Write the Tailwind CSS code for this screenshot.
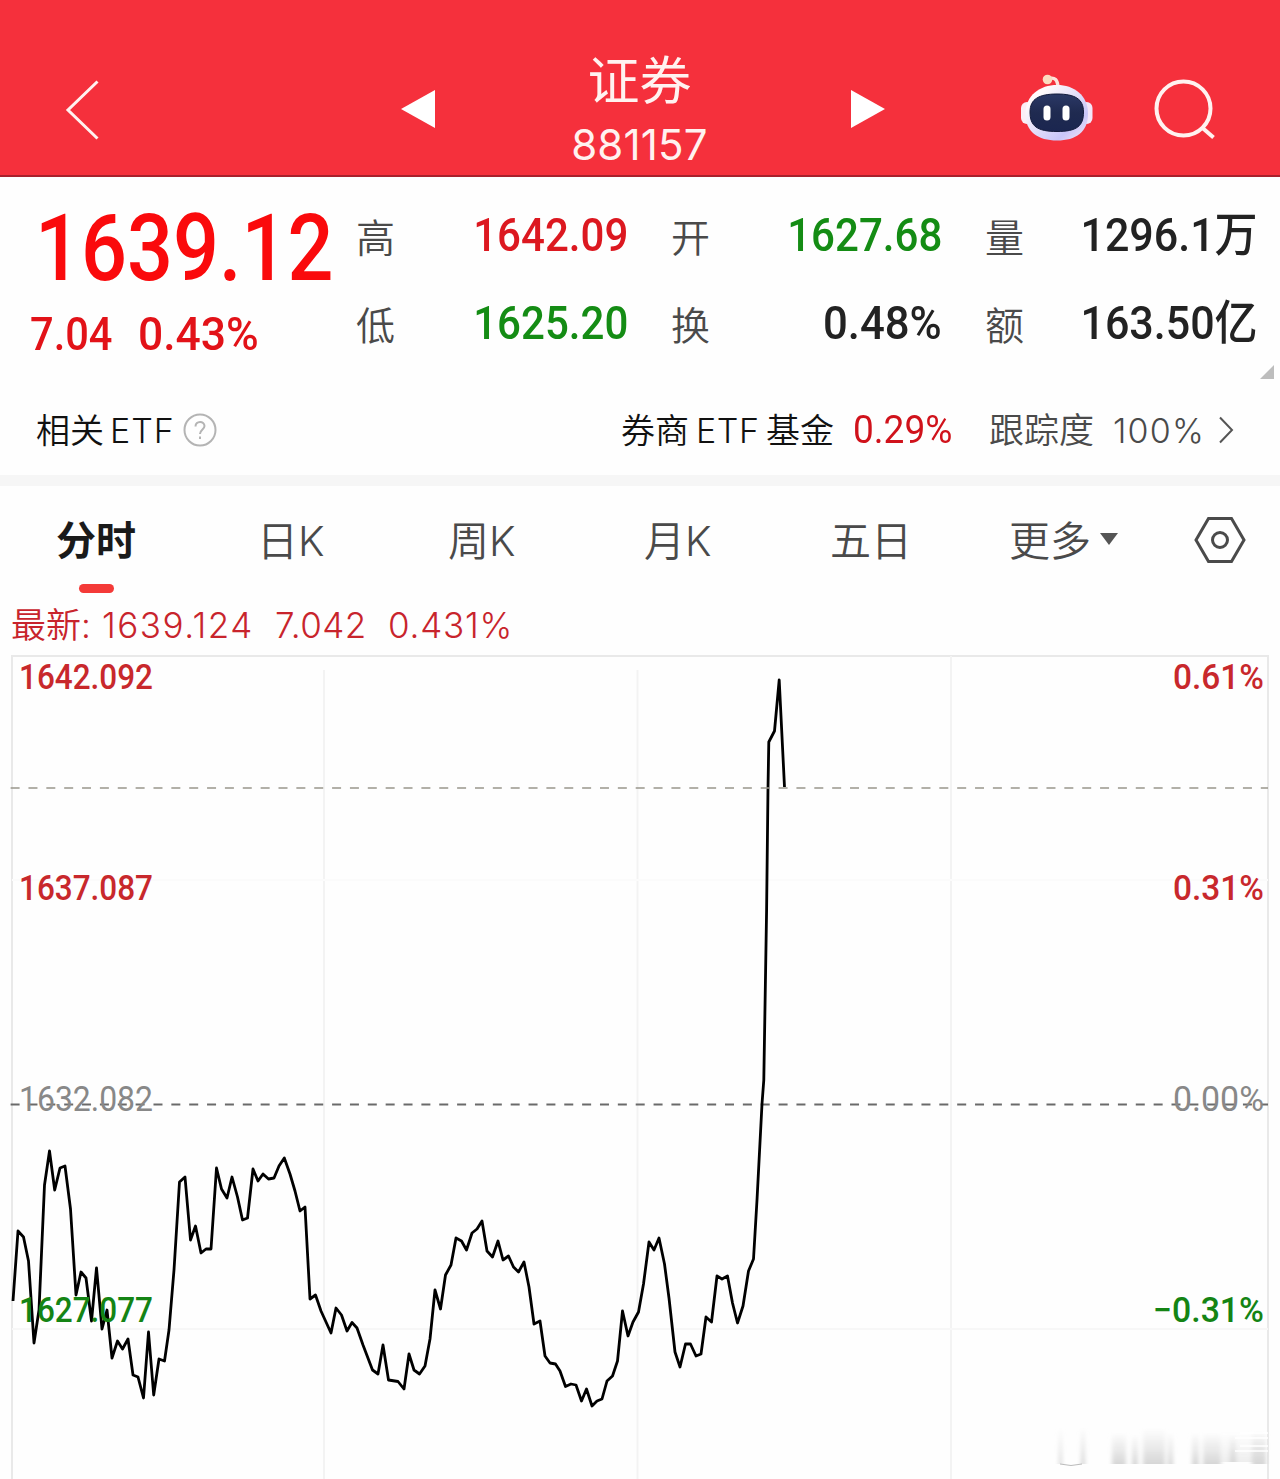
<!DOCTYPE html>
<html lang="zh-CN">
<head>
  <meta charset="UTF-8">
  <title>证券 881157</title>
  <script src="https://cdn.jsdelivr.net/npm/@tailwindcss/browser@4"></script>
</head>
<body class="w-[1280px] h-[1479px] overflow-hidden bg-[#fefefe] font-['Inter','Noto_Sans_CJK_SC',sans-serif] text-[#222] whitespace-nowrap">

  <!-- Header -->
  <header class="h-[177px] bg-[#f5303c] border-b-2 border-[#a8202c] flex items-start">
    <svg class="w-[40px] h-[64px] ml-[62px] mt-[78px]" viewBox="0 0 40 64" fill="none" stroke="#fff2f0" stroke-width="3"><path d="M35.5 3.5 6 32 35.5 60.5"/></svg>
    <svg class="w-[34px] h-[38px] ml-[299px] mt-[90px]" viewBox="0 0 34 38" fill="#fff"><path d="M34 0V38L0 19Z"/></svg>
    <div class="w-[416px] pt-[52px] pr-[7px] flex flex-col items-center text-[#fff2f0]">
      <h1 class="text-[52px] leading-[60px] font-normal">证券</h1>
      <p class="text-[42px] leading-[50px] mt-[8px] font-normal tracking-[0.2px]">881157</p>
    </div>
    <svg class="w-[34px] h-[38px] mt-[90px]" viewBox="0 0 34 38" fill="#fff"><path d="M0 0V38L34 19Z"/></svg>
    <!-- Robot assistant -->
    <svg class="w-[76px] h-[72px] ml-[134px] mt-[72px]" viewBox="1019 72 76 72">
      <defs>
        <linearGradient id="head" x1="0" y1="0" x2="1" y2="1">
          <stop offset="0.2" stop-color="#fffafc"/>
          <stop offset="0.75" stop-color="#c9c6f8"/>
          <stop offset="1" stop-color="#fbe6f2"/>
        </linearGradient>
        <linearGradient id="face" x1="0" y1="0" x2="0" y2="1">
          <stop offset="0" stop-color="#2b3866"/>
          <stop offset="0.5" stop-color="#1f2a50"/>
          <stop offset="1" stop-color="#1b2650"/>
        </linearGradient>
      </defs>
      <rect x="1021" y="102" width="12" height="22" rx="6" fill="#fbeef6"/>
      <rect x="1081" y="102" width="11.500" height="22" rx="6" fill="#f3e6f8"/>
      <path d="M1049 78.500C1055 77 1057.500 80 1058 87" fill="none" stroke="#fde3dc" stroke-width="3.400"/>
      <circle cx="1047.500" cy="79.500" r="4.800" fill="#fbdcc0"/>
      <path d="M1057 85C1074 85 1088 95 1088 114C1088 132 1076 140.500 1057 140.500C1038 140.500 1025.500 132 1025.500 114C1025.500 95 1040 85 1057 85Z" fill="url(#head)"/>
      <path d="M1057 94C1075 94 1083.500 99 1083.500 112C1083.500 126 1077 131.500 1057 131.500C1037 131.500 1030 126 1030 112C1030 99 1039 94 1057 94Z" fill="url(#face)" stroke="#141c3c" stroke-width="1"/>
      <rect x="1043.500" y="105.500" width="7" height="15" rx="3.500" fill="#fff"/>
      <rect x="1062.500" y="105.500" width="7" height="15" rx="3.500" fill="#fff"/>
    </svg>
    <svg class="w-[64px] h-[64px] ml-[58px] mt-[78px]" viewBox="0 0 64 64" fill="none" stroke="#fff2f0" stroke-width="4"><circle cx="30.500" cy="30.500" r="27"/><path d="M49 49.500 60.500 59.500"/></svg>
  </header>

  <!-- Quote -->
  <section class="h-[213px] flex font-['Roboto','Noto_Sans_CJK_SC',sans-serif] font-medium">
    <div class="w-[356px] text-[#e21218]">
      <div class="pl-[35px] pt-[22px] h-[114px] text-[93px] leading-[100px] text-[#fa0a0c]"><span class="inline-block origin-left scale-x-[0.87]">1639.12</span></div>
      <div class="pl-[30px] flex text-[47px] leading-[86px]">
        <span class="w-[108px]"><span class="inline-block origin-left scale-x-[0.885]">7.04</span></span>
        <span class="inline-block origin-left scale-x-[0.945]">0.43%</span>
      </div>
    </div>
    <div class="w-[902px] h-[176px] pt-[14px] grid grid-cols-[272px_271px_273px] gap-x-[43px] grid-rows-[88px_88px] items-center text-[47px]">
      <div class="flex justify-between items-center"><span class="pt-[8px] text-[39px] font-[350] text-[#4a4a4a]">高</span><span class="origin-right scale-x-[0.895] text-[#dc1820]">1642.09</span></div>
      <div class="flex justify-between items-center"><span class="pt-[8px] text-[39px] font-[350] text-[#4a4a4a]">开</span><span class="origin-right scale-x-[0.895] text-[#148c14]">1627.68</span></div>
      <div class="flex justify-between items-center"><span class="pt-[8px] text-[39px] font-[350] text-[#4a4a4a]">量</span><span class="origin-right scale-x-[0.915]">1296.1万</span></div>
      <div class="flex justify-between items-center"><span class="pt-[8px] text-[39px] font-[350] text-[#4a4a4a]">低</span><span class="origin-right scale-x-[0.895] text-[#148c14]">1625.20</span></div>
      <div class="flex justify-between items-center"><span class="pt-[8px] text-[39px] font-[350] text-[#4a4a4a]">换</span><span class="origin-right scale-x-[0.93]">0.48%</span></div>
      <div class="flex justify-between items-center"><span class="pt-[8px] text-[39px] font-[350] text-[#4a4a4a]">额</span><span class="origin-right scale-x-[0.915]">163.50亿</span></div>
    </div>
    <svg class="w-[14px] h-[14px] ml-[2px] mt-[188px]" viewBox="0 0 15 15" fill="#bdbdbd"><path d="M15 0V15H0Z"/></svg>
  </section>

  <!-- Related ETF -->
  <section class="h-[85px] pl-[36px] pr-[46px] pb-[5px] flex items-center text-[34px] font-[350] text-[#111]">
    <span>相关</span><span class="ml-[6px] tracking-[1px]">ETF</span>
    <svg class="w-[34px] h-[34px] ml-[8px]" viewBox="0 0 34 34" fill="none" stroke="#b4b4b4" stroke-width="2"><circle cx="17" cy="17" r="15.500"/><path d="M12.500 13.500C12.500 7.500 21.500 7.500 21.500 13C21.500 16.500 17 16.500 17 21"/><path d="M17 23.500V26"/></svg>
    <span class="ml-auto">券商</span><span class="w-[64px] ml-[7px] tracking-[0.6px]">ETF</span><span class="ml-[6px]">基金</span>
    <span class="w-[99px] ml-[19px] font-['Roboto'] text-[39px] font-normal text-[#d0121b]"><span class="inline-block origin-left scale-x-[0.95]">0.29%</span></span>
    <span class="ml-[37px] text-[35px] text-[#4a4a4a]">跟踪度</span>
    <span class="w-[93px] ml-[19px] tracking-[1.2px] text-[#4a4a4a]">100%</span>
    <svg class="w-[16px] h-[28px] ml-[12px]" viewBox="0 0 16 28" fill="none" stroke="#555" stroke-width="2"><path d="M2 1.500 14 14 2 26.500"/></svg>
  </section>
  <div class="h-[11px] bg-[#f6f6f6]"></div>

  <!-- Period tabs -->
  <nav class="h-[108px] flex text-[41px] leading-[110px] font-[350] text-[#4a4a4a]">
    <div class="w-[80px] ml-[56px] relative text-[40px] font-bold text-[#1a1a1a]">分时<span class="absolute left-[23px] top-[98px] w-[35px] h-[9px] rounded-full bg-[#f43a38]"></span></div>
    <span class="w-[191px] ml-[121px]">日K</span>
    <span class="w-[196px]">周K</span>
    <span class="w-[186px]">月K</span>
    <span class="w-[179px]">五日</span>
    <span class="w-[82px]">更多</span>
    <svg class="w-[18px] h-[12px] mt-[47px] ml-[9px]" viewBox="0 0 18 12" fill="#555"><path d="M0 0H18L9 12Z"/></svg>
    <svg class="w-[52px] h-[46px] ml-[76px] mt-[31px]" viewBox="0 0 52 46" fill="none" stroke="#4a4a4a" stroke-width="3"><path d="M14.500 1.500H37.500L50 23 37.500 44.500H14.500L2 23Z"/><circle cx="26" cy="23" r="7.500"/></svg>
  </nav>

  <!-- Latest price -->
  <div class="h-[60px] pl-[11px] pt-[3px] flex items-center text-[35px] font-[350] text-[#c8242c]">
    <span class="w-[91px]">最新:</span><span class="w-[173px] tracking-[1.5px]">1639.124</span><span class="w-[113px] tracking-[0.5px]">7.042</span><span class="tracking-[0.8px]">0.431%</span>
  </div>

  <!-- Intraday chart -->
  <svg class="block w-[1280px] h-[825px] font-['Roboto']" viewBox="0 654 1280 825" fill="none">
    <defs>
      <linearGradient id="fade" x1="0" y1="0" x2="0" y2="1">
        <stop offset="0" stop-color="#dcdcdc" stop-opacity="0"/>
        <stop offset="1" stop-color="#d6d6d6"/>
      </linearGradient>
      <filter id="soft"><feGaussianBlur stdDeviation="2 0.300"/></filter>
    </defs>
    <g stroke="#ececec" stroke-width="2">
      <path d="M12 1479V656H1268V1479" stroke="#e9e9e9"/>
      <path d="M324 670V1479M637.500 670V1479M951 656V1479" stroke="#f3f3f3"/>
      <path d="M12 880H1268" stroke="#fbfbfb"/>
      <path d="M12 1329H1268" stroke="#f7f7f7"/>
    </g>
    <g filter="url(#soft)" fill="url(#fade)">
      <rect x="1059" y="1428" width="3" height="36"/>
      <rect x="1081" y="1426" width="4" height="38"/>
      <rect x="1112" y="1432" width="14" height="32"/>
      <rect x="1132" y="1434" width="6" height="30"/>
      <rect x="1143" y="1428" width="22" height="36"/>
      <rect x="1168" y="1432" width="5" height="32"/>
      <rect x="1192" y="1432" width="7" height="32"/>
      <rect x="1203" y="1432" width="18" height="32"/>
      <rect x="1230" y="1434" width="6" height="28"/>
      <rect x="1252" y="1430" width="14" height="34"/>
      <rect x="1222" y="1432" width="44" height="30" opacity="0.4"/>
    </g>
    <path d="M1060 1464Q1071 1467 1082 1464" stroke="#bbb"/>
    <path d="M1240 1433H1268M1235 1438H1268M1240 1446H1268M1235 1451H1268" stroke="#fff" stroke-width="1.500"/>
    <path d="M10.600 1104.500H1268" stroke="#6a6a6a" stroke-width="1.800" stroke-dasharray="9 8.860"/>
    <polyline stroke="#000" stroke-width="2.800" stroke-linejoin="round" points="13,1301 18,1231 23.5,1237 28.5,1261 34,1343 39,1310 44.5,1185 49.5,1151 54.7,1190 60,1168 65,1166 70.5,1209 76,1295 81,1272 86,1278 91.5,1321 96.5,1268 102,1329 107,1310 112,1358 117.5,1341 122.5,1349 128,1339 133,1375 138,1377 143.5,1398 148.5,1332 153.7,1395 159,1359 164.5,1361 169,1330 174,1270 179.5,1182 185,1177 190.5,1240 195.5,1226 201,1253 206,1249 211,1249 216.5,1168 221.5,1189 227,1198 232,1177 237.5,1197 242.5,1220 247.5,1218 253,1169 258,1181 263,1174 268.5,1179 274,1178 279,1166 284.3,1158 290,1174 295,1191 300,1211 305,1207 310,1299 315.5,1295 321,1311 331,1333 336,1308 341.5,1315 347,1331 352,1322.5 357,1328 363,1345 372.5,1370 378,1374 383,1345 388.5,1380 398,1381.5 404,1389 409,1354 414,1370 419.5,1374 425,1366 430,1339 435,1290 440.5,1309 445.5,1275 451,1265 456,1238 461.5,1241 466.5,1250 472,1233 477,1229 482,1221 487,1251 492.5,1257 498,1241 503,1260 508.5,1256 513.5,1267 518.5,1272 524,1262 529,1287 534,1324 540,1321 545,1356 550,1363 555.5,1364 560,1371 565.5,1386.5 571,1384 576,1385 581.5,1401 586.5,1389 592,1406 597,1401 602,1399 607,1381 612.5,1376 617.5,1361 622.5,1311 628,1336 633,1322 638.5,1312 643.5,1284 649,1242 654,1250 659,1238 664.5,1264 669,1298 675,1352 680,1367 685.5,1344 690.5,1344 696,1356 701,1354 706,1317 711.5,1322 717,1276 722,1279 727.5,1276 732.5,1303 737.5,1323 743,1306 748.5,1271 753.5,1259 757,1200 762,1104 763.8,1080 766.6,910 768,788 768.8,742 774.5,731 779.2,680 784.5,787"/>
    <path d="M10.600 788H1268" stroke="#99968c" stroke-width="1.600" stroke-dasharray="9 8.860"/>
    <g font-size="35" font-weight="500" fill="#c8282c">
      <text x="19" y="689" textLength="134" lengthAdjust="spacingAndGlyphs">1642.092</text>
      <text x="19" y="900" textLength="134" lengthAdjust="spacingAndGlyphs">1637.087</text>
      <text x="19" y="1111" textLength="134" lengthAdjust="spacingAndGlyphs" fill="#888" font-weight="400">1632.082</text>
      <text x="19" y="1322" textLength="134" lengthAdjust="spacingAndGlyphs" fill="#148414">1627.077</text>
      <text x="1173" y="689" textLength="91" lengthAdjust="spacingAndGlyphs">0.61%</text>
      <text x="1173" y="900" textLength="91" lengthAdjust="spacingAndGlyphs">0.31%</text>
      <text x="1173" y="1111" textLength="91" lengthAdjust="spacingAndGlyphs" fill="#888" font-weight="400">0.00%</text>
      <text x="1153" y="1322" textLength="111" lengthAdjust="spacingAndGlyphs" fill="#148414">−0.31%</text>
    </g>
  </svg>
</body>
</html>
